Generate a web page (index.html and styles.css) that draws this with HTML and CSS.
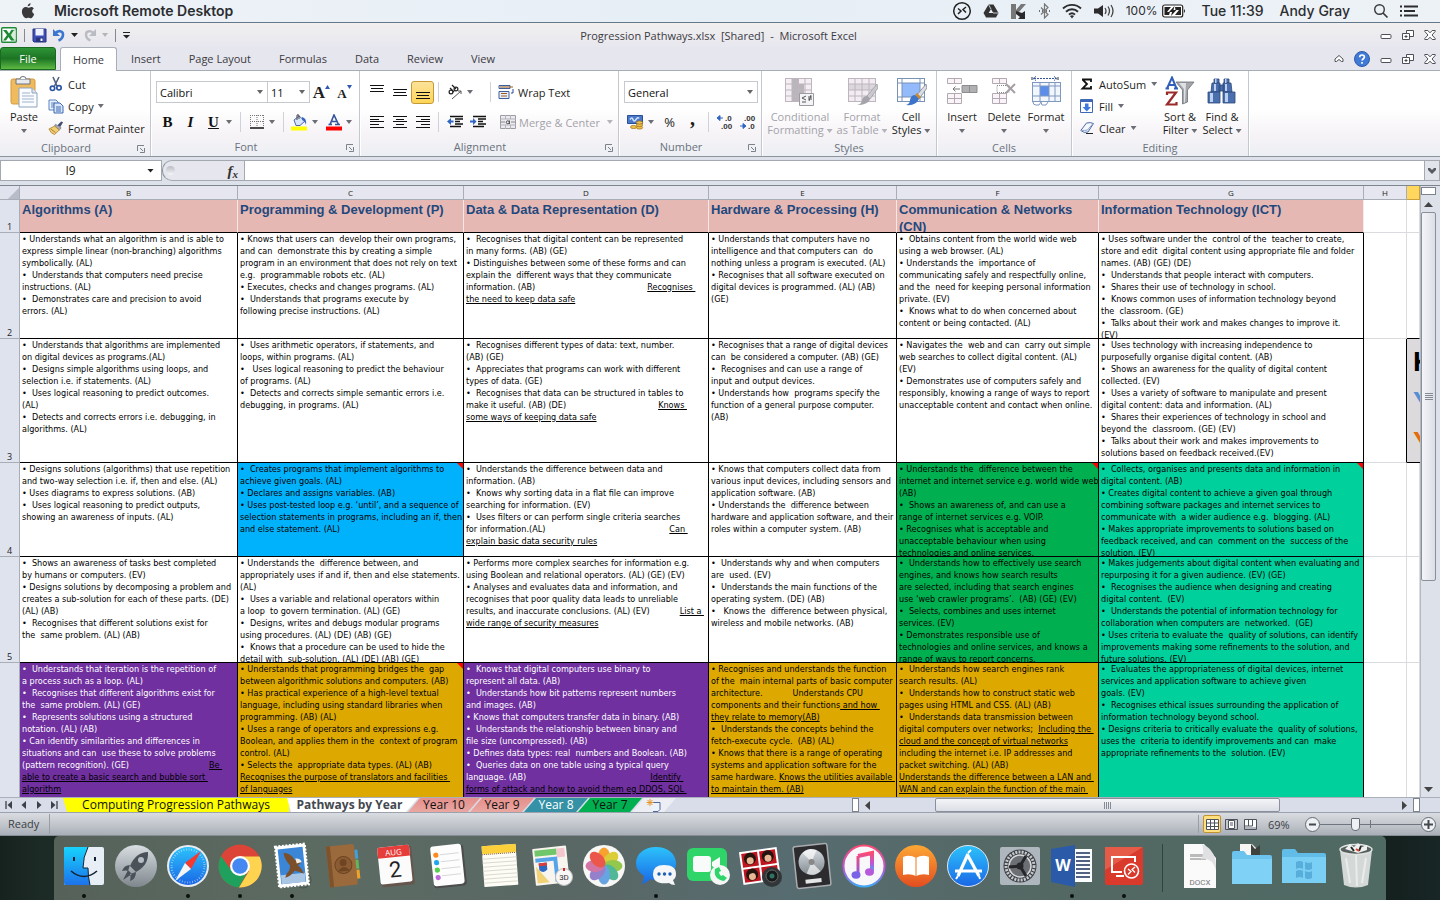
FILE: index.html
```html
<!DOCTYPE html>
<html lang="en">
<head>
<meta charset="utf-8">
<title>Progression Pathways.xlsx - Microsoft Excel</title>
<link rel="stylesheet" href="styles.css">
</head>
<body>
<header class="menubar">
  <svg class="apple" width="14" height="16" viewBox="0 0 14 16"><path d="M9.6.2c.1 1.600-1.300 3.200-2.900 3.100C6.500 1.900 8 .4 9.600.2zM12.900 5.400c-1.100.7-1.700 1.500-1.700 2.700 0 1.400.8 2.400 2 2.900-.6 1.800-1.900 4.300-3.500 4.300-.9 0-1.200-.6-2.300-.6s-1.500.6-2.300.6C3.200 15.300.9 11.800.9 8.600c0-3 1.900-4.600 3.700-4.600 1.200 0 2 .7 2.800.7.700 0 1.700-.8 3-.8 1 0 1.900.6 2.500 1.500z" fill="#3a3a3c"/></svg>
  <strong class="app-name">Microsoft Remote Desktop</strong>
  <div class="tray">
    <svg width="20" height="20" viewBox="0 0 20 20"><circle cx="10" cy="10" r="8.300" fill="none" stroke="#222" stroke-width="1.500"/><path d="M6 7.500l3 2.500-3 3M14 6l-3 2.500 3 3" fill="none" stroke="#222" stroke-width="1.500"/></svg>
    <svg width="16" height="16" viewBox="0 0 16 16"><path d="M5.500 1.500h5l5 8.500-2.500 4.500H3L.5 10z" fill="#333"/><path d="M8 6l2.300 4H5.700z" fill="#e9f0f6"/><path d="M5.500 1.500L8 6M15 10h-5" stroke="#e9f0f6" stroke-width=".8"/></svg>
    <svg width="17" height="17" viewBox="0 0 17 17"><path d="M1 1h5v6l5-6h5L9 9l-3 2v5H1z" fill="#777"/><path d="M6 8l6 2 3-2v8H8l2-2-4-3z" fill="#2a2a2c"/></svg>
    <svg width="13" height="16" viewBox="0 0 13 16"><path d="M3 4.500l7 7L6.500 15V1L10 4.500l-7 7" fill="none" stroke="#777" stroke-width="1.200"/><path d="M1 8h1M4 8h1M8 8h1M11 8h1" stroke="#444" stroke-width="1.500"/></svg>
    <svg width="20" height="16" viewBox="0 0 20 16"><g fill="none" stroke="#2c2c2e" stroke-width="1.900"><path d="M1 5.500a13 13 0 0 1 18 0M4 8.700a8.700 8.700 0 0 1 12 0M7 11.600a4.500 4.500 0 0 1 6 0"/></g><path d="M8 13l2 2.500 2-2.500q-2-1.500-4 0z" fill="#2c2c2e"/></svg>
    <svg width="22" height="16" viewBox="0 0 22 16"><path d="M1 5.500h4L10 2v12l-5-3.500H1z" fill="#2c2c2e"/><path d="M12 5q2 3 0 6M15 3.500q3 4.500 0 9M18 2q4 6 0 12" fill="none" stroke="#444" stroke-width="1.300"/></svg>
    <span class="battery-text">100%</span>
    <svg width="24" height="14" viewBox="0 0 24 14"><rect x=".7" y="1" width="20" height="12" rx="2" fill="#fff" stroke="#222" stroke-width="1.200"/><path d="M22 5v4q2-2 0-4z" fill="#222"/><path d="M2.500 3H9l-4 5h3l-1 3H2.500zM13 3h6v8h-6l4-5h-3.500z" fill="#222"/><path d="M12.500 2L7 8h3l-1 4 5.500-6h-3z" fill="#222"/></svg>
    <span class="clock">Tue 11:39</span>
    <span class="user">Andy Gray</span>
    <svg class="spot" width="16" height="16" viewBox="0 0 16 16"><circle cx="6.500" cy="6.500" r="4.800" fill="none" stroke="#3a3a3c" stroke-width="1.400"/><path d="M10 10l4.500 4.500" stroke="#3a3a3c" stroke-width="1.700"/></svg>
    <svg width="18" height="14" viewBox="0 0 18 14"><path d="M0 2.500h2M0 7h2M0 11.500h2M4 2.500h14M4 7h11M4 11.500h14" stroke="#2c2c2e" stroke-width="2"/></svg>
  </div>
</header>

<main class="excel">
  <div class="titlebar">
    <div class="quick">
      <svg width="16" height="16" viewBox="0 0 16 16"><rect x=".7" y=".7" width="14.600" height="14.600" rx="1" fill="#fff" stroke="#1e8a35" stroke-width="1.400"/><path d="M10 3h5v10h-5z" fill="#d9eeda" stroke="#7db98a" stroke-width=".6"/><path d="M2 3h3.500L8 6.500 10.500 3H13L9.500 8l4 5.500H10L7.500 10 5 13.500H2L6 8z" fill="#1b8a33"/></svg>
      <i class="vline"></i>
      <button aria-label="Save"><svg width="15" height="15" viewBox="0 0 15 15"><path d="M1 1h13v13H2l-1-1z" fill="#3f4fb8" stroke="#26337e"/><path d="M3.500 1h8v6.500h-8z" fill="#eef3ff"/><path d="M4 9.500h7V14H4z" fill="#26337e"/><path d="M8.500 10.500h2V13h-2z" fill="#fff"/></svg></button>
      <button aria-label="Undo"><svg width="14" height="14" viewBox="0 0 14 14"><path d="M3 5.500C6 2 11 2.500 11 6.500c0 3-2 5-4.500 6" fill="none" stroke="#3a78cf" stroke-width="2.600"/><path d="M1 1v7h7z" fill="#3a78cf"/></svg></button>
      <i class="dd black"></i>
      <button aria-label="Redo"><svg width="14" height="14" viewBox="0 0 14 14"><path d="M11 5.500C8 2 3 2.500 3 6.500c0 3 2 5 4.500 6" fill="none" stroke="#b9bcc2" stroke-width="2.400"/><path d="M13 1v7H6z" fill="#b9bcc2"/></svg></button>
      <i class="dd pale"></i>
      <i class="vline"></i>
      <button aria-label="Customize Quick Access Toolbar"><svg width="7" height="7" viewBox="0 0 7 7"><path d="M0 .5h7" stroke="#222"/><path d="M0 3h7L3.500 6.500z" fill="#222"/></svg></button>
    </div>
    <h1>Progression Pathways.xlsx&nbsp; [Shared]&nbsp; -&nbsp; Microsoft Excel</h1>
    <div class="winctl">
      <button aria-label="Minimize"><svg width="12" height="12"><use href="#w-min"/></svg></button>
      <button aria-label="Restore"><svg width="12" height="12"><use href="#w-res"/></svg></button>
      <button aria-label="Close"><svg width="12" height="12"><use href="#w-close"/></svg></button>
    </div>
  </div>

  <nav class="tabs">
    <button class="file">File</button>
    <button class="active">Home</button>
    <button>Insert</button>
    <button>Page Layout</button>
    <button>Formulas</button>
    <button>Data</button>
    <button>Review</button>
    <button>View</button>
    <div class="winctl">
      <button aria-label="Collapse ribbon"><svg width="10" height="10" viewBox="0 0 10 10"><path d="M1 5l4-3.500L9 5v2.500H7.500L5 5.500l-2.500 2H1z" fill="#fff" stroke="#4c5058"/></svg></button>
      <button aria-label="Help"><svg width="16" height="16" viewBox="0 0 16 16"><circle cx="8" cy="8" r="7.500" fill="#3f7ad6" stroke="#2c5ba8"/><path d="M5.700 6.200C5.700 3.300 10.400 3.300 10.400 6c0 1.700-2.300 1.800-2.300 3.600M8 11v1.800" fill="none" stroke="#fff" stroke-width="1.700"/></svg></button>
      <button aria-label="Minimize workbook"><svg width="12" height="12"><use href="#w-min"/></svg></button>
      <button aria-label="Restore workbook"><svg width="12" height="12"><use href="#w-res"/></svg></button>
      <button aria-label="Close workbook"><svg width="12" height="12"><use href="#w-close"/></svg></button>
    </div>
  </nav>

  <section class="ribbon">
    <div class="group g-clip">
      <div class="body">
        <button class="big"><svg width="32" height="32" viewBox="0 0 32 32"><rect x="3" y="3" width="24" height="25" rx="2" fill="#f0bb5c" stroke="#d59a3c"/><path d="M8 3h14v5H8z" fill="#e8eaee" stroke="#6e737c"/><path d="M12 3q0-2.500 3-2.500T18 3" fill="#fff" stroke="#6e737c"/><path d="M11 12h13l5 5v14H11z" fill="#fafcff" stroke="#8fa3bd"/><path d="M24 12v5h5" fill="#dde6f1" stroke="#8fa3bd"/><path d="M14 17h8M14 20h12M14 23h12M14 26h12" stroke="#9fb2cc"/></svg><span>Paste<br><i class="dd"></i></span></button>
        <div class="stack">
          <button><svg width="16" height="16" viewBox="0 0 16 16"><path d="M5 1l4 9M11 1L6.500 10" stroke="#53617c" stroke-width="1.600"/><circle cx="4.500" cy="12.300" r="2.200" fill="none" stroke="#2d55a5" stroke-width="1.700"/><circle cx="11" cy="11.800" r="2.200" fill="none" stroke="#2d55a5" stroke-width="1.700"/></svg>Cut</button>
          <button><svg width="16" height="16" viewBox="0 0 16 16"><path d="M1 2h7l2 2v8H1z" fill="#eaf2fd" stroke="#5b82c0"/><path d="M3 5h4M3 7h3M3 9h3" stroke="#5b82c0"/><path d="M6 5h6l3 3v7H6z" fill="#d8e7fb" stroke="#3f69b0"/><path d="M8 9h5M8 11h5M8 13h5" stroke="#3f69b0"/></svg>Copy<i class="dd"></i></button>
          <button><svg width="16" height="16" viewBox="0 0 17 16"><path d="M10 5l4-4 2 1-3 5z" fill="#404d73"/><path d="M8 4l6 4-2 2-5-4z" fill="#a9adb8" stroke="#5b5f6c" stroke-width=".6"/><path d="M7 6l5 4-5 5q-4-1-6-6z" fill="#f2cf72" stroke="#a4792e" stroke-width=".8"/><path d="M3 9l5 4" stroke="#a4792e"/></svg>Format Painter</button>
        </div>
      </div>
      <div class="label">Clipboard<svg width="8" height="8"><use href="#launch"/></svg></div>
    </div>

    <div class="group g-font">
      <div class="body rows">
        <div class="row">
          <select aria-label="Font" class="fontname"><option>Calibri</option></select><select aria-label="Font size" class="fontsize"><option>11</option></select>
          <button class="cell grow" aria-label="Grow font"><b>A</b><svg width="5" height="4" viewBox="0 0 5 4"><path d="M0 4l2.500-4L5 4z" fill="#2f58b2"/></svg></button>
          <button class="cell shrink" aria-label="Shrink font"><b>A</b><svg width="5" height="4" viewBox="0 0 5 4"><path d="M0 0l2.500 4L5 0z" fill="#2f58b2"/></svg></button>
        </div>
        <div class="row">
          <button class="cell serif"><b>B</b></button><button class="cell serif"><b><em>I</em></b></button><button class="cell serif"><b><u>U</u></b></button><i class="dd"></i>
          <i class="sep"></i>
          <button class="cell" aria-label="Borders"><svg width="14" height="14" viewBox="0 0 14 14"><path d="M.5 0v12M0 .5h14M13.500 0v12M7 0v12M0 6.500h14" stroke="#777" stroke-dasharray="1 1" fill="none"/><path d="M0 13h14" stroke="#111" stroke-width="1.500"/></svg></button><i class="dd"></i>
          <i class="sep"></i>
          <button class="cell" aria-label="Fill color"><svg width="17" height="17" viewBox="0 0 17 17"><path d="M0 12.500h16v4H0z" fill="#ff0"/><path d="M3 6l5-4 6 5-5 4.500H5z" fill="#d6e5fb" stroke="#4a69a8"/><path d="M6 6V1q2-1 2 1v3" fill="none" stroke="#444"/><path d="M11 3q5 1 4 8-1-4-4-5z" fill="#3b66bd"/></svg></button><i class="dd"></i>
          <button class="cell" aria-label="Font color"><svg width="16" height="17" viewBox="0 0 16 17"><path d="M0 12.500h16v4H0z" fill="#f00"/><path d="M2.500 10.500h3.500M9 10.500h5M4 10.500L8 1l4.500 9.500M5.500 7.500h5" fill="none" stroke="#34549c" stroke-width="1.600"/></svg></button><i class="dd"></i>
        </div>
      </div>
      <div class="label">Font<svg width="8" height="8"><use href="#launch"/></svg></div>
    </div>

    <div class="group g-align">
      <div class="body rows">
        <div class="row">
          <button class="cell" aria-label="Top align"><svg width="14" height="14" viewBox="0 0 14 14"><path d="M0 .5h14M1 3.500h12M0 6.500h14" stroke="#111" /></svg></button>
          <button class="cell" aria-label="Middle align"><svg width="14" height="14" viewBox="0 0 14 14"><path d="M0 4.500h14M1 7.500h12M0 10.500h14" stroke="#111"/></svg></button>
          <button class="cell on" aria-label="Bottom align"><svg width="14" height="14" viewBox="0 0 14 14"><path d="M0 7.500h14M1 10.500h12M0 13.500h14" stroke="#111"/></svg></button>
          <i class="sep"></i>
          <button class="cell" aria-label="Orientation"><svg width="16" height="16" viewBox="0 0 16 16"><g fill="none" stroke="#222" stroke-width="1.200"><circle cx="4" cy="8" r="1.900"/><path d="M3 4l4 4"/><circle cx="9" cy="5" r="1.900"/><path d="M5 1l4 4"/></g><path d="M5 15l9-8M14 7h-3M14 7v3" stroke="#555" fill="none"/></svg></button><i class="dd"></i>
          <i class="sep wide"></i>
          <button class="text"><svg width="16" height="16" viewBox="0 0 16 16"><path d="M1 1.500h11v3H1zM1 7.500h10v7H1z" fill="#e5eefb" stroke="#3d5f98"/><path d="M2 3h13M3 9.500h6M3 12h6" stroke="#a05a1c"/><path d="M15 5v4h-2" fill="none" stroke="#24499a"/></svg>Wrap Text</button>
        </div>
        <div class="row">
          <button class="cell" aria-label="Align left"><svg width="14" height="12" viewBox="0 0 14 12"><path d="M0 .5h14M0 3.500h9M0 5.500h14M0 8.500h9M0 11.500h14" stroke="#111"/></svg></button>
          <button class="cell" aria-label="Center"><svg width="14" height="12" viewBox="0 0 14 12"><path d="M0 .5h14M3 3.500h8M0 5.500h14M3 8.500h8M0 11.500h14" stroke="#111"/></svg></button>
          <button class="cell" aria-label="Align right"><svg width="14" height="12" viewBox="0 0 14 12"><path d="M0 .5h14M5 3.500h9M0 5.500h14M5 8.500h9M0 11.500h14" stroke="#111"/></svg></button>
          <i class="sep"></i>
          <button class="cell" aria-label="Decrease indent"><svg width="16" height="14" viewBox="0 0 16 14"><path d="M3 1.500h13M8 4h8M8 6.500h5M8 9h8M3 11.500h11" stroke="#111" stroke-width="1.300"/><path d="M0 6.500L4 3v2.500h2.500v2H4V10z" fill="#2f66c4"/></svg></button>
          <button class="cell" aria-label="Increase indent"><svg width="16" height="14" viewBox="0 0 16 14"><path d="M3 1.500h13M8 4h8M8 6.500h5M8 9h8M3 11.500h11" stroke="#111" stroke-width="1.300"/><path d="M6.500 6.500L3 3v2.500H0v2h3V10z" fill="#2f66c4"/></svg></button>
          <i class="sep thin"></i>
          <button class="text off"><svg width="16" height="14" viewBox="0 0 16 14"><path d="M.5.5h15v13H.5z" fill="#eceaf0" stroke="#9c9ca3"/><path d="M0 4h16M0 10h16M5.500 0v4M10.500 0v4M5.500 10v4M10.500 10v4" stroke="#b3b3ba"/><path d="M1 7h4M15 7h-4" stroke="#888"/><circle cx="7.800" cy="7.300" r="1.500" fill="none" stroke="#555"/><path d="M9.500 5.500V9" stroke="#555"/></svg>Merge &amp; Center<i class="dd pale"></i></button>
        </div>
      </div>
      <div class="label">Alignment<svg width="8" height="8"><use href="#launch"/></svg></div>
    </div>

    <div class="group g-num">
      <div class="body rows">
        <div class="row"><select aria-label="Number format" class="numfmt"><option>General</option></select></div>
        <div class="row">
          <button class="cell" aria-label="Accounting format"><svg width="17" height="16" viewBox="0 0 17 16"><path d="M.5 1.500h15v8H.5z" fill="#4a78c8" stroke="#284f98"/><path d="M3 5.500q2-3 3 0t3 0 3-1" fill="none" stroke="#cfe0ff" stroke-width="1.500"/><g fill="#f1c048" stroke="#9b6d13" stroke-width=".7"><ellipse cx="12.500" cy="13.500" rx="3.200" ry="1.600"/><ellipse cx="12.500" cy="11" rx="3.200" ry="1.600"/><ellipse cx="12.500" cy="8.500" rx="3.200" ry="1.600"/><ellipse cx="6.500" cy="13" rx="3" ry="1.600"/></g></svg></button><i class="dd"></i>
          <button class="cell pct">%</button><button class="cell comma">,</button>
          <i class="sep"></i>
          <button class="cell dec" aria-label="Increase decimal"><svg width="18" height="16" viewBox="0 0 18 16"><path d="M1 4h6M1 4l3-2.500v5z" stroke="#2f66c4" fill="#2f66c4"/><text x="9" y="7">.0</text><text x="5" y="15">.00</text></svg></button>
          <button class="cell dec" aria-label="Decrease decimal"><svg width="18" height="16" viewBox="0 0 18 16"><path d="M1 12h5M7 12L4 9.500v5z" stroke="#2f66c4" fill="#2f66c4"/><text x="5" y="7">.00</text><text x="9" y="15">.0</text></svg></button>
        </div>
      </div>
      <div class="label">Number<svg width="8" height="8"><use href="#launch"/></svg></div>
    </div>

    <div class="group g-styles">
      <div class="body">
        <button class="big off cf"><svg width="32" height="32" viewBox="0 0 32 32"><path d="M1 2h27v24H1z" fill="#f5eef4"/><path d="M8 2h6v24H8zM14 8h6v12h-6z" fill="#b9b5bb"/><path d="M1.500 2v24M8 2v24M14.500 2v24M21 2v24M27.500 2v24M1 2.500h27M1 8h27M1 14h27M1 20h27M1 25.500h27" stroke="#bdb6be" fill="none"/><path d="M15.500 17.500h14v12h-14z" fill="#f4f4f6" stroke="#9a9aa0"/><path d="M22 20l-4 2 4 2M18 26h4M24 21h4M24 23h4M27 19l-2 6" fill="none" stroke="#555"/></svg><span>Conditional<br>Formatting <i class="dd pale"></i></span></button>
        <button class="big off ft"><svg width="32" height="32" viewBox="0 0 32 32"><path d="M2 2h28v24H2z" fill="#f3ecf2"/><path d="M2 8h28v6H2z" fill="#dcd7dd"/><path d="M2.500 2v24M9 2v24M16 2v24M23 2v24M29.500 2v24M2 2.500h28M2 8h28M2 14h28M2 20h28M2 25.500h28" stroke="#bdb6be" fill="none"/><path d="M31 8L21 20l3 3 8-11z" fill="#c9c9cf" stroke="#94949b" stroke-width=".7"/><path d="M21 20l3 3q-2 6-13 6 5-1 5-5 1-4 5-4z" fill="#a5a4ab"/></svg><span>Format<br>as Table <i class="dd pale"></i></span></button>
        <button class="big cs"><svg width="32" height="32" viewBox="0 0 32 32"><path d="M2 2h28v24H2z" fill="#fff"/><path d="M7 7h18v14H7z" fill="#93bafa"/><path d="M2.500 2v24M7 2v24M25 2v24M29.500 2v24M2 2.500h28M2 7h28M2 21h28M2 25.500h28" stroke="#7892b8" fill="none"/><path d="M31 8L21 20l3 3 8-11z" fill="#dcdde2" stroke="#6f7685" stroke-width=".7"/><path d="M20 19l4 4 2-2-4-4z" fill="#c88a33"/><path d="M20 19l4 4q-3 7-13 6 4-1 4-5 1-5 5-5z" fill="#3c74ca"/></svg><span>Cell<br>Styles <i class="dd"></i></span></button>
      </div>
      <div class="label">Styles</div>
    </div>

    <div class="group g-cells">
      <div class="body">
        <button class="big"><svg width="32" height="32" viewBox="0 0 32 32"><g fill="#faf3f8" stroke="#b3a9b1"><path d="M1.500 2.500h14v5h-14zM8.500 2.500v5M1.500 17.500h14v10h-14zM8.500 17.500v10M1.500 22.500h14"/></g><path d="M16 9.500h15v7H16z" fill="#b0b0b3" stroke="#8c8c90"/><path d="M23.500 9.500v7" stroke="#8c8c90"/><path d="M14 13H7M9.500 10.500L7 13l2.500 2.500" stroke="#777" fill="none"/></svg><span>Insert<br><i class="dd"></i></span></button>
        <button class="big"><svg width="32" height="32" viewBox="0 0 32 32"><g fill="#faf3f8" stroke="#b3a9b1"><path d="M4.500 2.500h14v5h-14zM11.500 2.500v5M4.500 17.500h14v10h-14zM11.500 17.500v10M4.500 22.500h14"/></g><path d="M9 9.500h12v7H9z" fill="none" stroke="#888" stroke-dasharray="1 1"/><path d="M18 8l9 9M27 8l-9 9" stroke="#a5a0a5" stroke-width="2"/></svg><span>Delete<br><i class="dd"></i></span></button>
        <button class="big"><svg width="32" height="32" viewBox="0 0 32 32"><path d="M2 1v3M28 1v3" stroke="#333"/><path d="M4 2.500h22M6 .5l-3 2 3 2M24 .5l3 2-3 2" stroke="#34549c" fill="none" stroke-dasharray="2 1"/><path d="M2 6h29v20H2z" fill="#f2f6fd"/><path d="M10 10h9v10h-9z" fill="#5b8eea"/><path d="M2.500 6v20M10 6v20M19 6v20M25 6v20M30.500 6v20M2 6.500h29M2 10h29M2 20h29M2 25.500h29" stroke="#7f98bf" fill="none"/><path d="M3 26q0 3 3 3h3l2-3 1 3h4l2-3" fill="#fff" stroke="#7f98bf"/></svg><span>Format<br><i class="dd"></i></span></button>
      </div>
      <div class="label">Cells</div>
    </div>

    <div class="group g-edit">
      <div class="body">
        <div class="stack">
          <button><svg width="14" height="14" viewBox="0 0 14 14"><path d="M2 2.500h9V5M2.500 2.500L7 7l-4.500 4.500H11V9" fill="none" stroke="#111" stroke-width="1.800"/></svg>AutoSum<i class="dd"></i></button>
          <button><svg width="14" height="16" viewBox="0 0 14 16"><path d="M.5 1.500h12v13H.5z" fill="#fff" stroke="#3d68b5"/><path d="M1 2h11v2H1z" fill="#3d68b5"/><path d="M5 5.500h3.500v3.500H11L6.800 13.500 2.500 9H5z" fill="#3f7ae0"/></svg>Fill<i class="dd"></i></button>
          <button><svg width="14" height="14" viewBox="0 0 14 14"><path d="M.8 9.500L6.500 2q4-1 7 .5L8 11q-4 1.500-7.200-1.500z" fill="#f4f7fc" stroke="#4d6aa3"/><path d="M1 9.500q4 0 6.500-.5l5.500-6.500" fill="none" stroke="#8fa4cb"/><path d="M6 12.500h7" stroke="#222"/></svg>Clear<i class="dd"></i></button>
        </div>
        <button class="big"><svg width="32" height="32" viewBox="0 0 32 32"><path d="M3 12.500L8 1.500l4.500 11M5 9h6M1.500 12.500H5M10 12.500h4" fill="none" stroke="#3260b8" stroke-width="2"/><path d="M3 19v-2.500h9L3 28.500h9.500V26" fill="none" stroke="#9a2a2a" stroke-width="2.200"/><path d="M12 6h18l-6.500 8v12l-5 2V14z" fill="#a3a6ab" stroke="#6c7077" stroke-width=".8"/><path d="M15 7h7l-1 19-1 1V13z" fill="#dfe1e4"/></svg><span>Sort &amp;<br>Filter <i class="dd"></i></span></button>
        <button class="big"><svg width="32" height="32" viewBox="0 0 32 32"><g fill="#4a6fae" stroke="#2c477c" stroke-width=".8"><path d="M8 3h5v4H8zM18 3h5v4h-5z"/><path d="M6 7h8v9H5zM17 7h8l1 9h-9zM13 9h5v6h-5z"/><path d="M2 16h12v11H2zM17 16h12v11H17z"/></g><path d="M4 17h3v9H4zM19 17h3v9h-3zM8 8h2v7H8zM19 8h2v7h-2zM9 3h1.500v4H9zM19 3h1.500v4H19z" fill="#bcd0f0"/></svg><span>Find &amp;<br>Select <i class="dd"></i></span></button>
      </div>
      <div class="label">Editing</div>
    </div>
  </section>

  <div class="formula">
    <div class="namebox"><input aria-label="Name box" value="I9"><i class="dd black"></i></div>
    <div class="fx"><i class="knob"></i><em>f<sub>x</sub></em></div>
    <input class="bar" aria-label="Formula bar" value="">
    <button class="expand" aria-label="Expand formula bar"><svg width="8" height="6" viewBox="0 0 8 6"><path d="M0 0h2l2 2 2-2h2v2L4 6 0 2z" fill="#555a63"/></svg></button>
  </div>

  <div class="pane">
    <div class="gridwrap">
    <table class="sheet">
      <colgroup><col class="k0"><col class="kB"><col class="kC"><col class="kD"><col class="kE"><col class="kF"><col class="kG"><col class="kH"><col></colgroup>
      <thead><tr><th class="corner"></th><th>B</th><th>C</th><th>D</th><th>E</th><th>F</th><th>G</th><th>H</th><th class="sel"></th></tr></thead>
      <tbody>
      <tr class="r1 titles"><th>1</th>
        <td><div>Algorithms (A)</div></td><td><div>Programming &amp; Development (P)</div></td><td><div>Data &amp; Data Representation (D)</div></td><td><div>Hardware &amp; Processing (H)</div></td><td><div>Communication &amp; Networks
(CN)</div></td><td><div>Information Technology (ICT)</div></td><td class="n"></td><td class="n"></td></tr>
      <tr class="r2"><th>2</th>
        <td><div>• Understands what an algorithm is and is able to
express simple linear (non-branching) algorithms
symbolically. (AL)
•  Understands that computers need precise
instructions. (AL)
•  Demonstrates care and precision to avoid
errors. (AL)</div></td>
        <td><div>• Knows that users can  develop their own programs,
and can  demonstrate this by creating a simple
program in an environment that does not rely on text
e.g.  programmable robots etc. (AL)
• Executes, checks and changes programs. (AL)
•  Understands that programs execute by
following precise instructions. (AL)</div></td>
        <td><div>•  Recognises that digital content can be represented
in many forms. (AB) (GE)
• Distinguishes between some of these forms and can
explain the  different ways that they communicate
information. (AB)<u class="in-xl">Recognises </u>
<u>the need to keep data safe</u></div></td>
        <td><div>• Understands that computers have no
intelligence and that computers can  do
nothing unless a program is executed. (AL)
• Recognises that all software executed on
digital devices is programmed. (AL) (AB)
(GE)</div></td>
        <td><div>•  Obtains content from the world wide web
using a web browser. (AL)
• Understands the  importance of
communicating safely and respectfully online,
and the  need for keeping personal information
private. (EV)
•  Knows what to do when concerned about
content or being contacted. (AL)</div></td>
        <td><div>• Uses software under the  control of the  teacher to create,
store and edit  digital content using appropriate file and folder
names. (AB) (GE) (DE)
•  Understands that people interact with computers.
•  Shares their use of technology in school.
•  Knows common uses of information technology beyond
the  classroom. (GE)
•  Talks about their work and makes changes to improve it.
(EV)</div></td><td class="n"></td><td class="n under"></td></tr>
      <tr class="r3"><th>3</th>
        <td><div>•  Understands that algorithms are implemented
on digital devices as programs.(AL)
•  Designs simple algorithms using loops, and
selection i.e. if statements. (AL)
•  Uses logical reasoning to predict outcomes.
(AL)
•  Detects and corrects errors i.e. debugging, in
algorithms. (AL)</div></td>
        <td><div>•  Uses arithmetic operators, if statements, and
loops, within programs. (AL)
•   Uses logical reasoning to predict the behaviour
of programs. (AL)
•  Detects and corrects simple semantic errors i.e.
debugging, in programs. (AL)</div></td>
        <td><div>•  Recognises different types of data: text, number.
(AB) (GE)
•  Appreciates that programs can work with different
types of data. (GE)
•  Recognises that data can be structured in tables to
make it useful. (AB) (DE)<u class="in-l">Knows </u>
<u>some ways of keeping data safe</u></div></td>
        <td><div>• Recognises that a range of digital devices
can  be considered a computer. (AB) (GE)
•  Recognises and can use a range of
input and output devices.
• Understands how  programs specify the
function of a general purpose computer.
(AB)</div></td>
        <td><div>• Navigates the  web and can  carry out simple
web searches to collect digital content. (AL)
(EV)
• Demonstrates use of computers safely and
responsibly, knowing a range of ways to report
unacceptable content and contact when online.</div></td>
        <td><div>•  Uses technology with increasing independence to
purposefully organise digital content. (AB)
•  Shows an awareness for the quality of digital content
collected. (EV)
•  Uses a variety of software to manipulate and present
digital content: data and information. (AL)
•  Shares their experiences of technology in school and
beyond the  classroom. (GE) (EV)
•  Talks about their work and makes improvements to
solutions based on feedback received.(EV)</div></td><td class="n side"></td><td class="key"><div><b>K</b><b class="blue">Y</b><b class="orange">Y</b></div></td></tr>
      <tr class="r4"><th>4</th>
        <td><div>• Designs solutions (algorithms) that use repetition
and two-way selection i.e. if, then and else. (AL)
• Uses diagrams to express solutions. (AB)
•  Uses logical reasoning to predict outputs,
showing an awareness of inputs. (AL)</div></td>
        <td class="sky note"><div>•  Creates programs that implement algorithms to
achieve given goals. (AL)
• Declares and assigns variables. (AB)
• Uses post-tested loop e.g. ‘until’, and a sequence of
selection statements in programs, including an if, then
and else statement. (AL)</div></td>
        <td><div>•  Understands the difference between data and
information. (AB)
•  Knows why sorting data in a flat file can improve
searching for information. (EV)
•  Uses filters or can perform single criteria searches
for information.(AL)<u class="in-2xl">Can </u>
<u>explain basic data security rules</u></div></td>
        <td><div>• Knows that computers collect data from
various input devices, including sensors and
application software. (AB)
• Understands the  difference between
hardware and application software, and their
roles within a computer system. (AB)</div></td>
        <td class="green note"><div>• Understands the  difference between the
internet and internet service e.g. world wide web.
(AB)
•  Shows an awareness of, and can use a
range of internet services e.g. VOIP.
• Recognises what is acceptable and
unacceptable behaviour when using
technologies and online services.</div></td>
        <td class="teal note"><div>•  Collects, organises and presents data and information in
digital content. (AB)
• Creates digital content to achieve a given goal through
combining software packages and internet services to
communicate with  a wider audience e.g.  blogging. (AL)
• Makes appropriate improvements to solutions based on
feedback received, and can  comment on the  success of the
solution. (EV)</div></td><td class="n"></td><td class="n"></td></tr>
      <tr class="r5"><th>5</th>
        <td><div>•  Shows an awareness of tasks best completed
by humans or computers. (EV)
• Designs solutions by decomposing a problem and
creates a sub-solution for each of these parts. (DE)
(AL) (AB)
•  Recognises that different solutions exist for
the  same problem. (AL) (AB)</div></td>
        <td><div>• Understands the  difference between, and
appropriately uses if and if, then and else statements.
(AL)
•  Uses a variable and relational operators within
a loop  to govern termination. (AL) (GE)
•  Designs, writes and debugs modular programs
using procedures. (AL) (DE) (AB) (GE)
•  Knows that a procedure can be used to hide the
detail with  sub-solution. (AL) (DE) (AB) (GE)</div></td>
        <td><div>• Performs more complex searches for information e.g.
using Boolean and relational operators. (AL) (GE) (EV)
• Analyses and evaluates data and information, and
recognises that poor quality data leads to unreliable
results, and inaccurate conclusions. (AL) (EV)<u class="in-s">List a </u>
<u>wide range of security measures</u></div></td>
        <td><div>•  Understands why and when computers
are  used. (EV)
•  Understands the main functions of the
operating system. (DE) (AB)
•   Knows the  difference between physical,
wireless and mobile networks. (AB)</div></td>
        <td class="green"><div>•  Understands how to effectively use search
engines, and knows how search results
are selected, including that search engines
use ‘web crawler programs’.  (AB) (GE) (EV)
•  Selects, combines and uses internet
services. (EV)
• Demonstrates responsible use of
technologies and online services, and knows a
range of ways to report concerns.</div></td>
        <td class="teal"><div>• Makes judgements about digital content when evaluating and
repurposing it for a given audience. (EV) (GE)
•  Recognises the audience when designing and creating
digital content.  (EV)
•  Understands the potential of information technology for
collaboration when computers are  networked.  (GE)
• Uses criteria to evaluate the  quality of solutions, can identify
improvements making some refinements to the solution, and
future solutions. (EV)</div></td><td class="n"></td><td class="n"></td></tr>
      <tr class="r6"><th></th>
        <td class="purple"><div>•  Understands that iteration is the repetition of
a process such as a loop. (AL)
•  Recognises that different algorithms exist for
the  same problem. (AL) (GE)
•  Represents solutions using a structured
notation. (AL) (AB)
• Can identify similarities and differences in
situations and can  use these to solve problems
(pattern recognition). (GE)<u class="in-m">Be </u>
<u>able to create a basic search and bubble sort </u>
<u>algorithm</u></div></td>
        <td class="gold note"><div>• Understands that programming bridges the  gap
between algorithmic solutions and computers. (AB)
• Has practical experience of a high-level textual
language, including using standard libraries when
programming. (AB) (AL)
• Uses a range of operators and expressions e.g.
Boolean, and applies them in the  context of program
control. (AL)
• Selects the  appropriate data types. (AL) (AB)
<u>Recognises the purpose of translators and facilities </u>
<u>of languages</u></div></td>
        <td class="purple"><div>•  Knows that digital computers use binary to
represent all data. (AB)
•  Understands how bit patterns represent numbers
and images. (AB)
• Knows that computers transfer data in binary. (AB)
•  Understands the relationship between binary and
file size (uncompressed). (AB)
• Defines data types: real  numbers and Boolean. (AB)
•  Queries data on one table using a typical query
language. (AB)<u class="in-2xl">Identify </u>
<u>forms of attack and how to avoid them eg DDOS, SQL </u></div></td>
        <td class="gold"><div>• Recognises and understands the function
of the  main internal parts of basic computer
architecture.<span class="in-s">Understands CPU</span>
components and their functions<u> and how </u>
<u>they relate to memory(AB)</u>
•  Understands the concepts behind the
fetch-execute cycle.  (AB) (AL)
• Knows that there is a range of operating
systems and application software for the
same hardware. <u>Knows the utilities available </u>
<u>to maintain them. (AB)</u></div></td>
        <td class="gold"><div>•  Understands how search engines rank
search results. (AL)
•  Understands how to construct static web
pages using HTML and CSS. (AL) (AB)
•  Understands data transmission between
digital computers over networks;  <u>Including the </u>
<u>cloud and the concept of virtual networks</u>
including the internet i.e. IP addresses and
packet switching. (AL) (AB)
<u>Understands the difference between a LAN and </u>
<u>WAN and can explain the function of the main </u></div></td>
        <td class="teal"><div>•  Evaluates the appropriateness of digital devices, internet
services and application software to achieve given
goals. (EV)
•  Recognises ethical issues surrounding the application of
information technology beyond school.
• Designs criteria to critically evaluate the  quality of solutions,
uses the  criteria to identify improvements and can  make
appropriate refinements to the  solution. (EV)</div></td><td class="n"></td><td class="n"></td></tr>
      </tbody>
    </table>
    </div>
    <div class="vscroll">
      <i class="split"></i>
      <button aria-label="Scroll up"><svg width="9" height="5" viewBox="0 0 9 5"><path d="M0 5l4.500-5L9 5z" fill="#444"/></svg></button>
      <div class="track"><i class="thumb"><svg width="8" height="7" viewBox="0 0 8 7"><path d="M0 .5h8M0 2.500h8M0 4.500h8M0 6.500h8" stroke="#858b95"/></svg></i></div>
      <button aria-label="Scroll down"><svg width="9" height="5" viewBox="0 0 9 5"><path d="M0 0l4.500 5L9 0z" fill="#444"/></svg></button>
    </div>
  </div>

  <div class="sheetbar">
    <div class="nav">
      <button aria-label="First sheet"><svg width="8" height="8" viewBox="0 0 8 8"><path d="M1 0v8" stroke="#3c4048" stroke-width="1.300"/><path d="M7 0v8L2.500 4z" fill="#3c4048"/></svg></button>
      <button aria-label="Previous sheet"><svg width="8" height="8" viewBox="0 0 8 8"><path d="M6 0v8L1.500 4z" fill="#3c4048"/></svg></button>
      <button aria-label="Next sheet"><svg width="8" height="8" viewBox="0 0 8 8"><path d="M2 0v8l4.500-4z" fill="#3c4048"/></svg></button>
      <button aria-label="Last sheet"><svg width="8" height="8" viewBox="0 0 8 8"><path d="M7 0v8" stroke="#3c4048" stroke-width="1.300"/><path d="M1 0v8l4.500-4z" fill="#3c4048"/></svg></button>
    </div>
    <button class="stab yellow">Computing Progression Pathways</button>
    <button class="stab current">Pathways by Year</button>
    <button class="stab coral">Year 10</button>
    <button class="stab coral">Year 9</button>
    <button class="stab ocean">Year 8</button>
    <button class="stab leaf">Year 7</button>
    <button class="stab new" aria-label="Insert worksheet"><svg width="16" height="13" viewBox="0 0 16 13"><path d="M4 3.500h10v7l-2 2H7" fill="#eef3fb" stroke="#4b68a0"/><path d="M4 0v7M.5 3.500h7M1.500 1l5 5M6.500 1l-5 5" stroke="#e5962a"/></svg></button>
    <div class="hscroll">
      <i class="split"></i>
      <button aria-label="Scroll left"><svg width="5" height="9" viewBox="0 0 5 9"><path d="M5 0v9L0 4.500z" fill="#444"/></svg></button>
      <div class="track"><i class="thumb"><svg width="8" height="7" viewBox="0 0 8 7"><path d="M.5 0v7M2.500 0v7M4.500 0v7M6.500 0v7" stroke="#858b95"/></svg></i></div>
      <button aria-label="Scroll right"><svg width="5" height="9" viewBox="0 0 5 9"><path d="M0 0v9l5-4.500z" fill="#444"/></svg></button>
      <i class="split"></i>
    </div>
  </div>

  <footer class="status">
    <span class="ready">Ready</span>
    <div class="views">
      <button class="on" aria-label="Normal view"><svg width="13" height="11" viewBox="0 0 13 11"><path d="M.5.5h12v10H.5zM4.500 0v11M8.500 0v11M0 4h13M0 7.500h13" fill="#fff" stroke="#4d525c"/></svg></button>
      <button aria-label="Page layout view"><svg width="13" height="11" viewBox="0 0 13 11"><path d="M.5.5h12v10H.5z" fill="#c5c8cd" stroke="#4d525c"/><path d="M3.500 1.500h6v8h-6z" fill="#fff" stroke="#4d525c"/><path d="M5 4h3M5 6h3" stroke="#4d525c"/></svg></button>
      <button aria-label="Page break view"><svg width="13" height="11" viewBox="0 0 13 11"><path d="M.5.500h12v10H.5z" fill="#fff" stroke="#4d525c"/><path d="M0 7h8.500V0M4.500 0v7" fill="none" stroke="#4d525c"/><path d="M1 8h11v2H1z" fill="#b3b7bd"/></svg></button>
    </div>
    <span class="pctval">69%</span>
    <button class="round" aria-label="Zoom out"><svg width="9" height="9" viewBox="0 0 9 9"><path d="M1 4.500h7" stroke="#44484f" stroke-width="2"/></svg></button>
    <input class="zoom" type="range" aria-label="Zoom" min="0" max="100" value="34">
    <button class="round" aria-label="Zoom in"><svg width="9" height="9" viewBox="0 0 9 9"><path d="M0 4.500h9M4.500 0v9" stroke="#44484f" stroke-width="2"/></svg></button>
  </footer>
</main>

<div class="desktop">
  <div class="dock">
    <i class="app run"><svg viewBox="0 0 52 52"><rect x="6" y="7" width="40" height="38" rx="2" fill="#e8eef5"/><path d="M8 7h22q-5 10-5 21h5q0 9 2 17H8q-2 0-2-2V9q0-2 2-2z" fill="url(#finder)"/><path d="M30 7q-5 10-5 21h5q0 9 2 17" fill="none" stroke="#123" stroke-width="1"/><path d="M16 17v4M37 17v4" stroke="#123" stroke-width="2"/><path d="M13 31q13 11 26 0" fill="none" stroke="#123" stroke-width="1.600"/></svg></i>
    <i class="app"><svg viewBox="0 0 52 52"><circle cx="26" cy="26" r="21" fill="url(#steel)"/><path d="M38 12q-12 0-18 14l6 6Q39 25 38 12z" fill="#4b5158"/><circle cx="31" cy="20" r="3" fill="#b8bdc3"/><path d="M20 25q-6 0-8 6 4-1 6 0zM26 32q0 7-6 9 1-5 0-7zM18 30l-5 10 9-6z" fill="#4b5158"/></svg></i>
    <i class="app run"><svg viewBox="0 0 52 52"><circle cx="26" cy="26" r="21" fill="#e9edf1"/><circle cx="26" cy="26" r="19" fill="url(#blue)"/><circle cx="26" cy="26" r="16.500" fill="none" stroke="#fff" stroke-width="2" stroke-dasharray=".6 2" opacity=".7"/><path d="M39 11L23 23l6 6z" fill="#f4392f"/><path d="M13 41l16-12-6-6z" fill="#f5f5f5"/></svg></i>
    <i class="app run"><svg viewBox="0 0 52 52"><circle cx="26" cy="26" r="21.500" fill="#db4437"/><path d="M7 16A21.500 21.500 0 0 0 25 47.500l9-16.500-17-1z" fill="#1fa15d"/><path d="M26 16.500h19.500A21.500 21.500 0 0 1 25 47.500L35 31z" fill="#fdd34f"/><circle cx="26" cy="26" r="10" fill="#fff"/><circle cx="26" cy="26" r="7.800" fill="#4688f1"/></svg></i>
    <i class="app run"><svg viewBox="0 0 52 52"><circle cx="37" cy="40" r="8" fill="none" stroke="#44564f"/><g transform="rotate(-6 26 26)"><rect x="11" y="5" width="30" height="41" fill="#fff" stroke="#fff" stroke-width="2" stroke-dasharray="2 1.500"/><rect x="13.500" y="8" width="25" height="35" fill="#3b86d6"/><path d="M14 34h24v9H14z" fill="#a9c6e4"/><path d="M19 12q8 2 10 8 5 0 6 4l-3 2q4 4 5 9-5-3-9-4-4 5-10 6l2-4q4-3 4-8-5-6-5-13z" fill="#7a4f2a"/><path d="M30 19q5 0 6 4l-5 1z" fill="#f4efe4"/></g></svg></i>
    <i class="app"><svg viewBox="0 0 52 52"><g transform="rotate(-6 26 26)"><path d="M36 11h5v9h-5z" fill="#3fa2dd"/><path d="M36 21h5v9h-5z" fill="#65b65a"/><path d="M36 31h5v9h-5z" fill="#f0a32c"/><rect x="10" y="5" width="28" height="41" rx="2" fill="#9a693c"/><path d="M10 5h4v41h-4z" fill="#7f522b"/><circle cx="25.500" cy="25" r="8.500" fill="#8b5c33" stroke="#6e4522"/><circle cx="25.500" cy="22.500" r="3.500" fill="#6e4522"/><path d="M19.500 31q6-8 12 0z" fill="#6e4522"/></g></svg></i>
    <i class="app"><svg viewBox="0 0 52 52"><g transform="rotate(-6 26 26)"><rect x="10" y="7" width="33" height="39" rx="2" fill="#66554c"/><rect x="9" y="6" width="32" height="37" rx="2" fill="#fbfbfb"/><path d="M9 17V8q0-2 2-2h28q2 0 2 2v9z" fill="#e63c3a"/><text x="25" y="15" class="month">AUG</text><text x="25" y="37" class="day">2</text></g></svg></i>
    <i class="app"><svg viewBox="0 0 52 52"><g transform="rotate(-6 26 26)"><rect x="10" y="6" width="33" height="41" rx="3" fill="#4c4c4e"/><rect x="10" y="5" width="31" height="40" rx="3" fill="#fdfdfd"/><g stroke="#d8d8da"><path d="M19 14h19M19 21h19M19 28h19M19 35h19"/></g><circle cx="15" cy="14" r="2.600" fill="#ff8a1f"/><circle cx="15" cy="21.500" r="2.600" fill="#1fa7ef"/><circle cx="15" cy="29" r="2.600" fill="#56cf4a"/><circle cx="15" cy="36.500" r="2.600" fill="#bd67dc"/></g></svg></i>
    <i class="app"><svg viewBox="0 0 52 52"><g transform="rotate(-4 26 26)"><rect x="9" y="5" width="34" height="41" rx="1" fill="#fdfcf5"/><path d="M9 5h34v8H9z" fill="#fcd03a"/><path d="M9 13.500h34" stroke="#7b5b28" stroke-dasharray="1 1"/><path d="M9 18h34M9 22h34M9 26h34M9 30h34M9 34h34M9 38h34M9 42h34" stroke="#dbd9cf"/></g></svg></i>
    <i class="app"><svg viewBox="0 0 52 52"><g transform="rotate(-6 26 26)"><rect x="8" y="7" width="34" height="37" rx="1" fill="#f7f5ee"/><path d="M10 9h22v6H10z" fill="#70c66b"/><path d="M32 9h8v9h-8z" fill="#f5c6ce"/><path d="M10 42V25l12 17z" fill="#f1d276"/><path d="M10 19h20v23" fill="none" stroke="#55a4e9" stroke-width="4"/><path d="M13 22h8v7q-4 4-8 0z" fill="#2d68c4"/><path d="M13 22h8v3h-8z" fill="#da3d3a"/></g><circle cx="38" cy="37" r="8.500" fill="#f7f7f7" stroke="#bbb"/><text x="38" y="40" class="tag">3D</text><path d="M38 28v3" stroke="#d22" stroke-width="2"/></svg></i>
    <i class="app"><svg viewBox="0 0 52 52"><circle cx="26" cy="26" r="21" fill="#f7f7f5"/><g opacity=".92"><ellipse cx="26" cy="17" rx="6" ry="9.500" fill="#f79a1e"/><ellipse cx="26" cy="17" rx="6" ry="9.500" fill="#d9c92b" transform="rotate(45 26 26)"/><ellipse cx="26" cy="17" rx="6" ry="9.500" fill="#8bc53f" transform="rotate(90 26 26)"/><ellipse cx="26" cy="17" rx="6" ry="9.500" fill="#42b38f" transform="rotate(135 26 26)"/><ellipse cx="26" cy="17" rx="6" ry="9.500" fill="#5a9fe0" transform="rotate(180 26 26)"/><ellipse cx="26" cy="17" rx="6" ry="9.500" fill="#8d76c8" transform="rotate(225 26 26)"/><ellipse cx="26" cy="17" rx="6" ry="9.500" fill="#cf6b9f" transform="rotate(270 26 26)"/><ellipse cx="26" cy="17" rx="6" ry="9.500" fill="#ea4a3c" transform="rotate(315 26 26)"/></g></svg></i>
    <i class="app run"><svg viewBox="0 0 52 52"><path d="M26 7c12 0 20 7 20 16.500S38 40 26 40q-3 0-6-1-3 4-9 5 3-3 3-8Q6 31 6 23.500C6 14 14 7 26 7z" fill="url(#blue)"/><path d="M34 25q12 0 12 9 0 4-3 6l2 5q-4 0-6-2-16 2-16-9 0-9 11-9z" fill="#f4f6f8"/><circle cx="29" cy="34" r="1.700" fill="#1b5fb8"/><circle cx="34.500" cy="34" r="1.700" fill="#1b5fb8"/><circle cx="40" cy="34" r="1.700" fill="#1b5fb8"/></svg></i>
    <i class="app"><svg viewBox="0 0 52 52"><rect x="5" y="8" width="40" height="33" rx="6" fill="#2fd568"/><rect x="11" y="16" width="18" height="16" rx="3" fill="#f8fbf9"/><path d="M30 22l8-5v14l-8-5z" fill="#f8fbf9"/><circle cx="38" cy="35" r="10" fill="#f4f7f5"/><path d="M33 29q-2 10 9 12l3-3-4-3-2 1q-2-2-2-4l2-1-2-4z" fill="#2fd568"/></svg></i>
    <i class="app"><svg viewBox="0 0 52 52"><g transform="rotate(-8 22 26)"><rect x="7" y="10" width="38" height="33" fill="#fff"/><path d="M9 12h16v14H9zM27 12h16v14H27zM9 28h16v13H9zM27 28h16v13H27z" fill="#c0141f"/><g fill="#26140f"><circle cx="17" cy="18" r="6"/><circle cx="35" cy="18" r="6"/><circle cx="17" cy="34" r="6"/></g><g fill="#e9b794"><circle cx="17" cy="20" r="3.500"/><circle cx="35" cy="20" r="3.500"/><circle cx="17" cy="36" r="3.500"/></g></g><circle cx="38" cy="37" r="10" fill="#333639"/><circle cx="38" cy="36" r="6" fill="#17191b" stroke="#666"/><circle cx="38" cy="36" r="2.500" fill="#2e7263"/></svg></i>
    <i class="app"><svg viewBox="0 0 52 52"><g transform="rotate(-6 26 26)"><rect x="9" y="5" width="34" height="42" rx="2" fill="#2c2c2f" stroke="#a9abae" stroke-width="1.500"/><circle cx="26" cy="22" r="13" fill="url(#steel)"/><path d="M26 22l-8-10q8-5 14-1zM26 22l8 10q-8 5-14 1z" fill="#fff" opacity=".65"/><circle cx="26" cy="22" r="3" fill="#888"/><path d="M18 39h16v4H18z" fill="#e4e5e7"/></g></svg></i>
    <i class="app"><svg viewBox="0 0 52 52"><circle cx="26" cy="26" r="20.500" fill="#f8f8fa" stroke="url(#pink)" stroke-width="2"/><path d="M20 16l14-3v18" fill="none" stroke="url(#pink)" stroke-width="4"/><path d="M20 16v18" stroke="url(#pink2)" stroke-width="3"/><ellipse cx="18" cy="35" rx="4.500" ry="3.700" fill="#7b63e8"/><ellipse cx="31.500" cy="32" rx="4.500" ry="3.700" fill="#b759db"/></svg></i>
    <i class="app"><svg viewBox="0 0 52 52"><circle cx="26" cy="26" r="21" fill="url(#orange)"/><path d="M26 18q-6-4-13-1v18q7-2 13 1 6-3 13-1V17q-7-3-13 1z" fill="#fff"/><path d="M26 18v18" stroke="#ec7b1c"/></svg></i>
    <i class="app"><svg viewBox="0 0 52 52"><circle cx="26" cy="26" r="20.500" fill="url(#blue)" stroke="#dfe8f2"/><path d="M26 14l-10 22M25 14l12 22M13 31h27" fill="none" stroke="#fff" stroke-width="3.200"/><path d="M26 13l3-3M14 39l2-3M38 39l-1-3" stroke="#fff" stroke-width="2"/></svg></i>
    <i class="app"><svg viewBox="0 0 52 52"><rect x="6" y="7" width="40" height="38" rx="2" fill="#aeb6be"/><circle cx="26" cy="26" r="16.500" fill="#3b3e42"/><circle cx="26" cy="26" r="14" fill="none" stroke="#c5c9cd" stroke-width="3" stroke-dasharray="2 1.200"/><circle cx="26" cy="26" r="11" fill="#6c7075" stroke="#d8dadd" stroke-width="1.500"/><path d="M26 26L15 27M26 26l6-10M26 26l6 10" stroke="#25272a" stroke-width="3"/><circle cx="26" cy="26" r="3.500" fill="#25272a"/></svg></i>
    <i class="app run"><svg viewBox="0 0 52 52"><rect x="27" y="9" width="19" height="33" fill="#fbfcfe"/><path d="M30 13h14M30 17h14M30 21h14M30 25h14M30 29h14M30 33h14M30 37h14" stroke="#1c2e5e" stroke-width="1.500"/><path d="M5 9l24-4v42L5 42z" fill="#2b5aa9"/><text x="17" y="31" class="word">W</text></svg></i>
    <i class="app run"><svg viewBox="0 0 52 52"><rect x="7" y="7" width="38" height="38" rx="2" fill="#d93a2b"/><path d="M7 7h38L7 30z" fill="#e65a48"/><path d="M24 32H14V17h23v5M18 36h8" fill="none" stroke="#fff" stroke-width="2"/><circle cx="33.500" cy="31" r="7" fill="#d93a2b" stroke="#fff" stroke-width="1.600"/><path d="M30 29l3 2.500-3 3M37 27l-3 2.500 3 3" fill="none" stroke="#fff" stroke-width="1.300"/></svg></i>
    <i class="divider"></i>
    <i class="app"><svg viewBox="0 0 52 52"><path d="M10 4h20l12 14v30H10z" fill="#fafafa"/><path d="M16 14h14v3H16zM16 18h16v2H16z" fill="#bbb"/><path d="M28 4q3 9-1 15 11-2 15 11 1-20-14-26z" fill="#e1e1e3"/><text x="26" y="45" class="tag grey">DOCX</text></svg></i>
    <i class="app"><svg viewBox="0 0 52 52"><path d="M14 4h12l6 6v10H14z" fill="#f6f6f4"/><path d="M25 4l4 5 5-4v12h-9z" fill="#3d423f"/><path d="M6 13q0-2 2-2h10l3 4h23q2 0 2 2v27H6z" fill="#6cc4ee"/><path d="M6 19h40v25H6z" fill="#7fd2f6"/></svg></i>
    <i class="app"><svg viewBox="0 0 52 52"><path d="M4 11q0-2 2-2h11l3 4h26q2 0 2 2v28H4z" fill="#62bce8"/><path d="M4 17h44v26H4z" fill="#7acff5"/><path d="M18 22q4-2 7 0v7q-3-2-7 0zM27 22q4 2 7 0v7q-4 2-7 0zM18 31q4-2 7 0v7q-3-2-7 0zM27 31q4 2 7 0v7q-4 2-7 0z" fill="#58aeda"/></svg></i>
    <i class="app"><svg viewBox="0 0 52 52"><path d="M10 10h32l-4 35q-12 5-24 0z" fill="#d4d8d7"/><path d="M16 18l4 25M26 15l1 31M36 18l-4 25" stroke="#e9ecec" stroke-width="2"/><ellipse cx="26" cy="9.500" rx="16" ry="5" fill="#57605c" stroke="#dfe3e2" stroke-width="1.500"/><path d="M15 9l5-5 4 3 4-4 4 4 5-2v5l-9 3z" fill="#eef1f0"/><path d="M21 7l3 4M31 6l-2 5" stroke="#26292b" stroke-width="2"/><path d="M26 9l3 2" stroke="#d8462e" stroke-width="2"/></svg></i>
  </div>
</div>

<svg class="defs" aria-hidden="true">
  <defs>
    <linearGradient id="blue" x2="0" y2="1"><stop offset="0" stop-color="#2cc2fb"/><stop offset="1" stop-color="#1a67e6"/></linearGradient>
    <linearGradient id="finder" x2="0" y2="1"><stop offset="0" stop-color="#17d3fd"/><stop offset="1" stop-color="#1d72ea"/></linearGradient>
    <linearGradient id="steel" x2="0" y2="1"><stop offset="0" stop-color="#d8dee2"/><stop offset="1" stop-color="#7f878d"/></linearGradient>
    <linearGradient id="orange" x2="0" y2="1"><stop offset="0" stop-color="#fda834"/><stop offset="1" stop-color="#e44d1f"/></linearGradient>
    <linearGradient id="pink" x2="0" y2="1"><stop offset="0" stop-color="#fb4a72"/><stop offset=".6" stop-color="#b759db"/><stop offset="1" stop-color="#3fa9f5"/></linearGradient>
    <linearGradient id="pink2" gradientUnits="userSpaceOnUse" x1="20" y1="14" x2="20" y2="36"><stop offset="0" stop-color="#fb4a72"/><stop offset="1" stop-color="#7b63e8"/></linearGradient>
    <symbol id="w-min" viewBox="0 0 12 12"><rect x="1" y="5.500" width="10" height="4" rx="1" fill="#fff" stroke="#4c5058"/></symbol>
    <symbol id="w-res" viewBox="0 0 12 12"><path d="M4.500 1.500h7v6h-7z" fill="#fff" stroke="#4c5058"/><path d="M.5 4.500h7v6h-7z" fill="#fff" stroke="#4c5058"/><path d="M3 7h2v1H3z" stroke="#4c5058"/></symbol>
    <symbol id="w-close" viewBox="0 0 12 12"><path d="M.8 1.500h3L6 3.800l2.200-2.300h3v1L8 6l3.200 3.500v1h-3L6 8.200l-2.200 2.300h-3v-1L4 6 .8 2.500z" fill="#fff" stroke="#4c5058"/></symbol>
    <symbol id="launch" viewBox="0 0 8 8"><path d="M.5 6V.5H7M3 3l3 3M7.500 3v4.500H3" fill="none" stroke="#7c828c"/></symbol>
  </defs>
</svg>
</body>
</html>
```

FILE: styles.css
```css
* { box-sizing: border-box; }
html, body { height: 100%; }
body {
  margin: 0;
  display: flex;
  flex-direction: column;
  overflow: hidden;
  font-family: "Open Sans", "Noto Sans", sans-serif;
  font-size: 11px;
  color: #1e1e22;
}
button, input, select { font: inherit; color: inherit; margin: 0; padding: 0; border: 0; background: none; }
button { display: inline-flex; align-items: center; justify-content: center; white-space: nowrap; }
svg { display: block; flex: none; }
i { font-style: normal; }
.defs { position: absolute; width: 0; height: 0; }

/* Mac menu bar */
.menubar {
  flex: none;
  display: flex;
  align-items: center;
  height: 23px;
  padding: 0 22px 0 21px;
  background: linear-gradient(90deg, #eef3f7, #e6eef6 50%, #edf2f6);
  border-bottom: 1px solid #64788a;
  font: 500 14px/22px Inter, "Open Sans", sans-serif;
  color: #2b2d30;
}
.app-name { margin-left: 19px; font-weight: 600; }
.tray { display: flex; align-items: center; gap: 11px; margin-left: auto; }
.battery-text { font-size: 12px; font-weight: 400; margin-right: -7px; }
.clock { margin-left: 5px; }
.user { margin-left: 5px; }
.spot { margin-left: 12px; }

/* Window chrome */
.excel { flex: 1; min-height: 0; display: flex; flex-direction: column; background: #e6e6ee; }
.titlebar {
  flex: none;
  display: flex;
  align-items: center;
  height: 24px;
  background: linear-gradient(#f1efef, #e7e7ef);
}
.titlebar h1 { flex: none; margin: 0; font-size: 11px; font-weight: 400; color: #3b3b3f; }
.quick { flex: 1; display: flex; align-items: center; gap: 5px; padding-left: 1px; }
.vline { width: 1px; height: 13px; margin: 0 2px; background: #85888e; }
.winctl { flex: 1; display: flex; align-items: center; justify-content: flex-end; gap: 10px; padding-right: 4px; }
.dd { display: inline-block; flex: none; width: 6px; height: 4px; background: #6b6e74; clip-path: polygon(0 0, 100% 0, 50% 100%); vertical-align: middle; }
.dd.black { width: 7px; height: 4px; background: #222; }
.dd.pale { background: #b4b4ba; }

.tabs { flex: none; display: flex; align-items: stretch; height: 24px; border-bottom: 1px solid #a8aeb8; }
.tabs > button { height: 23px; padding: 0 14px; color: #3b3b40; }
.tabs > .file {
  width: 56px;
  margin-right: 4px;
  border-radius: 3px 3px 0 0;
  border: 1px solid #1b6b1f;
  background: linear-gradient(#2e9437, #1c7423 50%, #5eb944);
  color: #fff;
}
.tabs > .active { height: 24px; width: 57px; border: 1px solid #a8aeb8; border-bottom: 0; border-radius: 3px 3px 0 0; background: #fff; }

/* Ribbon */
.ribbon {
  flex: none;
  display: flex;
  height: 86px;
  background: linear-gradient(#fff 45%, #f6f3f6 75%, #eceff4);
  border-bottom: 1px solid #8d949c;
}
.group { flex: none; display: flex; flex-direction: column; border-right: 1px solid #c3c7ce; box-shadow: 1px 0 #fff; }
.g-clip { width: 151px; }
.g-font { width: 209px; }
.g-align { width: 259px; }
.g-num { width: 143px; }
.g-styles { width: 175px; }
.g-cells { width: 135px; }
.g-edit { width: 177px; }
.body { flex: 1; display: flex; padding: 3px 3px 0; }
.g-cells .body { padding-left: 4px; }
.body.rows { flex-direction: column; padding: 7px 5px 0; gap: 2px; }
.row { display: flex; align-items: center; height: 28px; }
.label { position: relative; height: 17px; line-height: 15px; text-align: center; color: #6a717c; padding-right: 18px; }
.label svg { position: absolute; right: 5px; top: 5px; }
.g-styles .label, .g-cells .label, .g-edit .label { padding-right: 0; }
.big { flex-direction: column; justify-content: flex-start; width: 42px; height: 66px; padding-top: 2px; gap: 2px; line-height: 13px; text-align: center; }
.big.cf { width: 70px; }
.big.ft { width: 54px; }
.big.cs { width: 44px; }
.off { color: #a3a3aa; }
.stack { display: flex; flex-direction: column; padding-left: 3px; }
.stack button { height: 22px; justify-content: flex-start; gap: 4px; margin-top: -1px; margin-bottom: 1px; }
.g-edit .stack { width: 84px; padding-left: 5px; }
.g-edit .stack button { gap: 5px; }
.cell { width: 23px; height: 23px; flex: none; }
.cell.on { border: 1px solid #c59a35; border-radius: 3px; background: linear-gradient(#fbe29a, #ffd558); }
.cell.serif { font: 15px "Liberation Serif", serif; color: #111; }
.row > .dd { margin: 0 4px 0 1px; }
.grow, .shrink { font-family: "Liberation Serif", serif; align-items: flex-start; }
.grow b { font-size: 17px; line-height: 24px; }
.shrink b { font-size: 13px; line-height: 26px; }
.grow svg, .shrink svg { margin-top: 4px; }
.sep { width: 1px; height: 20px; margin: 0 4px; background: #cfd2d8; flex: none; }
.sep.wide { margin: 0 7px 0 13px; }
.sep.thin { margin: 0 8px 0 2px; background: none; }
.text { gap: 4px; }
.text.off { gap: 3px; }
.text .dd { margin-left: 4px; }
.pct { font-size: 13px; }
.comma { font: bold 20px/12px "Liberation Serif", serif; padding-bottom: 8px; }
.dec text { font: bold 8px "Liberation Sans", sans-serif; fill: #333; }
select {
  appearance: none;
  flex: none;
  height: 22px;
  padding: 0 3px;
  border: 1px solid #c6c9d0;
  border-radius: 0;
  color: #111;
  background: #fff url("data:image/svg+xml,%3Csvg xmlns='http://www.w3.org/2000/svg' width='6' height='4'%3E%3Cpath d='M0 0h6L3 4z' fill='%23666'/%3E%3C/svg%3E") no-repeat right 4px center;
}
.fontname { width: 112px; }
.fontsize { width: 43px; margin-left: -1px; }
.numfmt { width: 134px; }

/* Formula bar */
.formula { flex: none; display: flex; height: 29px; padding: 3px 0 4px; background: #dde2ea; border-bottom: 1px solid #7e858f; }
.namebox { flex: none; display: flex; align-items: center; width: 162px; border: 1px solid #a4a9b1; background: #fff; padding-right: 7px; }
.namebox input { width: 100%; text-align: center; font-size: 12px; padding-right: 7px; }
.fx { flex: none; display: flex; align-items: center; justify-content: space-between; width: 83px; padding: 0 6px 0 3px; background: #e6e6ee; border: 1px solid #a4a9b1; border-left-color: #8d929b; border-radius: 10px 0 0 10px; }
.knob { width: 9px; height: 9px; border-radius: 50%; background: linear-gradient(#b9bcc5, #f7f7fa); }
.fx em { font: italic bold 15px/18px "Liberation Serif", serif; color: #333; }
.fx sub { font-size: 11px; line-height: 1px; vertical-align: -2px; }
.bar { flex: 1; min-width: 0; background: #fff; border: 1px solid #a4a9b1; border-width: 1px 0; }
.expand { width: 16px; border: 1px solid #a4a9b1; background: #e1e4ea; }

/* Worksheet */
.pane { flex: 1; min-height: 0; display: flex; background: #fff; }
.gridwrap { flex: 1; min-width: 0; overflow: hidden; }
.sheet { width: 100%; table-layout: fixed; border-collapse: separate; border-spacing: 0; font: 9px/12px "DejaVu Sans Condensed", "Liberation Sans", Arial, sans-serif; color: #000; }
.k0 { width: 20px; } .kB { width: 218px; } .kC { width: 226px; } .kD { width: 245px; }
.kE { width: 188px; } .kF { width: 202px; } .kG { width: 265px; } .kH { width: 43px; }
.sheet th { padding: 0; font: 8px/12px "Open Sans", sans-serif; color: #222; background: #e5e6ef; border-right: 1px solid #a9adb6; border-bottom: 1px solid #a9adb6; }
.sheet thead th { height: 14px; }
.sheet thead .corner { background: linear-gradient(135deg, #e0e3ee 65%, #b8bcc8 66%); }
.sheet thead .sel { background: #ffd75e; border-color: #c9a03a; }
.sheet tbody th { background: #dfe3ee; vertical-align: bottom; font-size: 9px; line-height: 10px; }
.sheet td { position: relative; padding: 0; vertical-align: top; border-right: 1px solid #000; border-bottom: 1px solid #000; }
.sheet td div { padding-left: 2px; overflow: hidden; white-space: pre; }
.sheet td.n { border-color: #d9dbdf; }
.sheet td.side { border-right-color: #000; }
.sheet td.under { border-bottom-color: #000; }
.r1 { height: 33px; } .r1 div { height: 32px; }
.r2 { height: 106px; } .r2 div { height: 105px; }
.r3 { height: 124px; } .r3 div { height: 123px; }
.r4 { height: 94px; } .r4 div { height: 93px; }
.r5 { height: 106px; } .r5 div { height: 105px; }
.r6 { height: 140px; } .r6 div { height: 139px; }
.titles td { background: #e6b8b4; border-right-color: #f6e8e6; font: bold 13px/17px "Liberation Sans", Arial, sans-serif; color: #1f497d; }
.titles td.n { background: #fff; }
.titles td div { padding-top: 1px; }
.sky { background: #00b2fb; }
.green { background: #00b050; }
.teal { background: #00d09c; }
.purple { background: #7030a0; color: #fff; }
.gold { background: #dda900; }
.purple u { color: #000; }
.note::after { content: ""; position: absolute; top: 0; right: 0; width: 6px; height: 6px; background: #f00; clip-path: polygon(0 0, 100% 0, 100% 100%); }
.in-s { margin-left: 30px; }
.in-m { margin-left: 80px; }
.in-l { margin-left: 92px; }
.in-xl { margin-left: 112px; }
.in-2xl { margin-left: 124px; }
.sheet td.key { background: #dcdadd; border-right: 0; }
.sheet .key div { display: flex; flex-direction: column; padding: 3px 0 0 6px; }
.key b { font: bold 28px/40px "Liberation Sans", Arial, sans-serif; }
.key .blue { color: #558ed5; }
.key .orange { color: #e46c0a; }

.vscroll { flex: none; width: 20px; display: flex; flex-direction: column; padding-right: 4px; background: #dce1ea; border-left: 1px solid #b3b8c1; }
.vscroll button { height: 16px; }
.split { flex: none; border: 1px solid #7d838d; background: #fff; }
.vscroll .split { height: 8px; margin: 1px 0; }
.vscroll .track { flex: 1; padding-bottom: 200px; display: flex; }
.thumb { flex: 1; display: flex; align-items: center; justify-content: center; border: 1px solid #8a909a; border-radius: 2px; }
.vscroll .thumb { background: linear-gradient(90deg, #f4f5f8, #dbdee6); }
.hscroll .thumb { background: linear-gradient(#f4f5f8, #dbdee6); }

/* Sheet tabs */
.sheetbar { flex: none; display: flex; height: 16px; background: #d8dde9; border-bottom: 1px solid #9ba2ae; border-top: 1px solid #aab0ba; }
.nav { display: flex; align-items: center; gap: 7px; width: 62px; padding-left: 5px; }
.stab { flex: none; height: 14px; font-size: 12px; line-height: 14px; clip-path: polygon(12px 0, 100% 0, calc(100% - 12px) 100%, 0 100%); margin-left: -10px; color: #111; }
.stab.yellow { width: 226px; margin-left: 1px; background: #ff0; clip-path: polygon(0 0, 100% 0, 100% 100%, 4px 100%); }
.stab.current { width: 131px; margin-left: -2px; padding-right: 6px; background: #fff; color: #44484f; font-weight: 700; clip-path: polygon(0 0, 100% 0, calc(100% - 12px) 100%, 4px 100%); }
.stab.coral { width: 72px; background: linear-gradient(#e58f8c, #eaa7a1); }
.stab.coral + .coral { width: 64px; }
.stab.ocean { width: 64px; background: #3591a5; color: #fff; }
.stab.leaf { width: 64px; background: #00b050; }
.stab.new { width: 44px; background: #eceef4; }
.hscroll { flex: 1; margin: 0 20px 0 176px; display: flex; }
.hscroll .split { width: 7px; }
.hscroll button { width: 17px; }
.hscroll .track { flex: 1; display: flex; padding: 0 116px 0 59px; }

/* Status bar */
.status { flex: none; display: flex; align-items: center; height: 23px; padding: 0 4px 0 8px; background: linear-gradient(#d9dce0, #c3c7cd 50%, #a9afb7); color: #3b3e44; border-bottom: 1px solid #868c94; }
.ready { width: 42px; height: 20px; line-height: 20px; border-right: 1px solid #989ea6; }
.views { display: flex; align-items: center; gap: 1px; margin-left: auto; padding: 0 9px 0 4px; border-left: 1px solid #989ea6; }
.views button { width: 18px; height: 18px; }
.views .on { border: 1px solid #c09233; border-radius: 2px; background: #ffdf7e; }
.pctval { width: 37px; }
.round { width: 15px; height: 15px; border: 1px solid #656b74; border-radius: 50%; background: #eef0f3; }
.zoom { appearance: none; width: 101px; height: 14px; background: linear-gradient(#6f757e, #6f757e) no-repeat center / 100% 1px, linear-gradient(#6f757e, #6f757e) no-repeat center / 1px 8px; }
.zoom::-webkit-slider-thumb { appearance: none; width: 9px; height: 13px; background: #eef0f3; border: 1px solid #656b74; border-radius: 1px 1px 4px 4px; }

/* Desktop and dock */
.desktop { flex: none; display: flex; justify-content: center; height: 64px; background: linear-gradient(90deg, #16221d, #1d2b26 3%, #14211f 97%, #182626); }
.dock { display: flex; padding: 0 4px; border-radius: 5px 5px 0 0; background: linear-gradient(90deg, #566259, #5c6b62 20%, #596765 40%, #576c70 55%, #546863 75%, #4f6963); }
.app { position: relative; width: 52px; height: 64px; padding-top: 4px; }
.app svg { width: 52px; height: 52px; }
.app.run::after { content: ""; position: absolute; left: 24px; bottom: 2px; width: 4px; height: 4px; border-radius: 50%; background: #0b0f0d; }
.divider { width: 1px; height: 48px; margin: 8px 11px 0 12px; background: #32423d; }
.month { font: 8px "Open Sans", sans-serif; fill: #fff; text-anchor: middle; }
.day { font: 22px Roboto, sans-serif; fill: #222; text-anchor: middle; }
.tag { font: 8px Roboto, sans-serif; fill: #333; text-anchor: middle; }
.tag.grey { fill: #777; }
.word { font: bold 16px "Open Sans", sans-serif; fill: #fff; text-anchor: middle; }
```
